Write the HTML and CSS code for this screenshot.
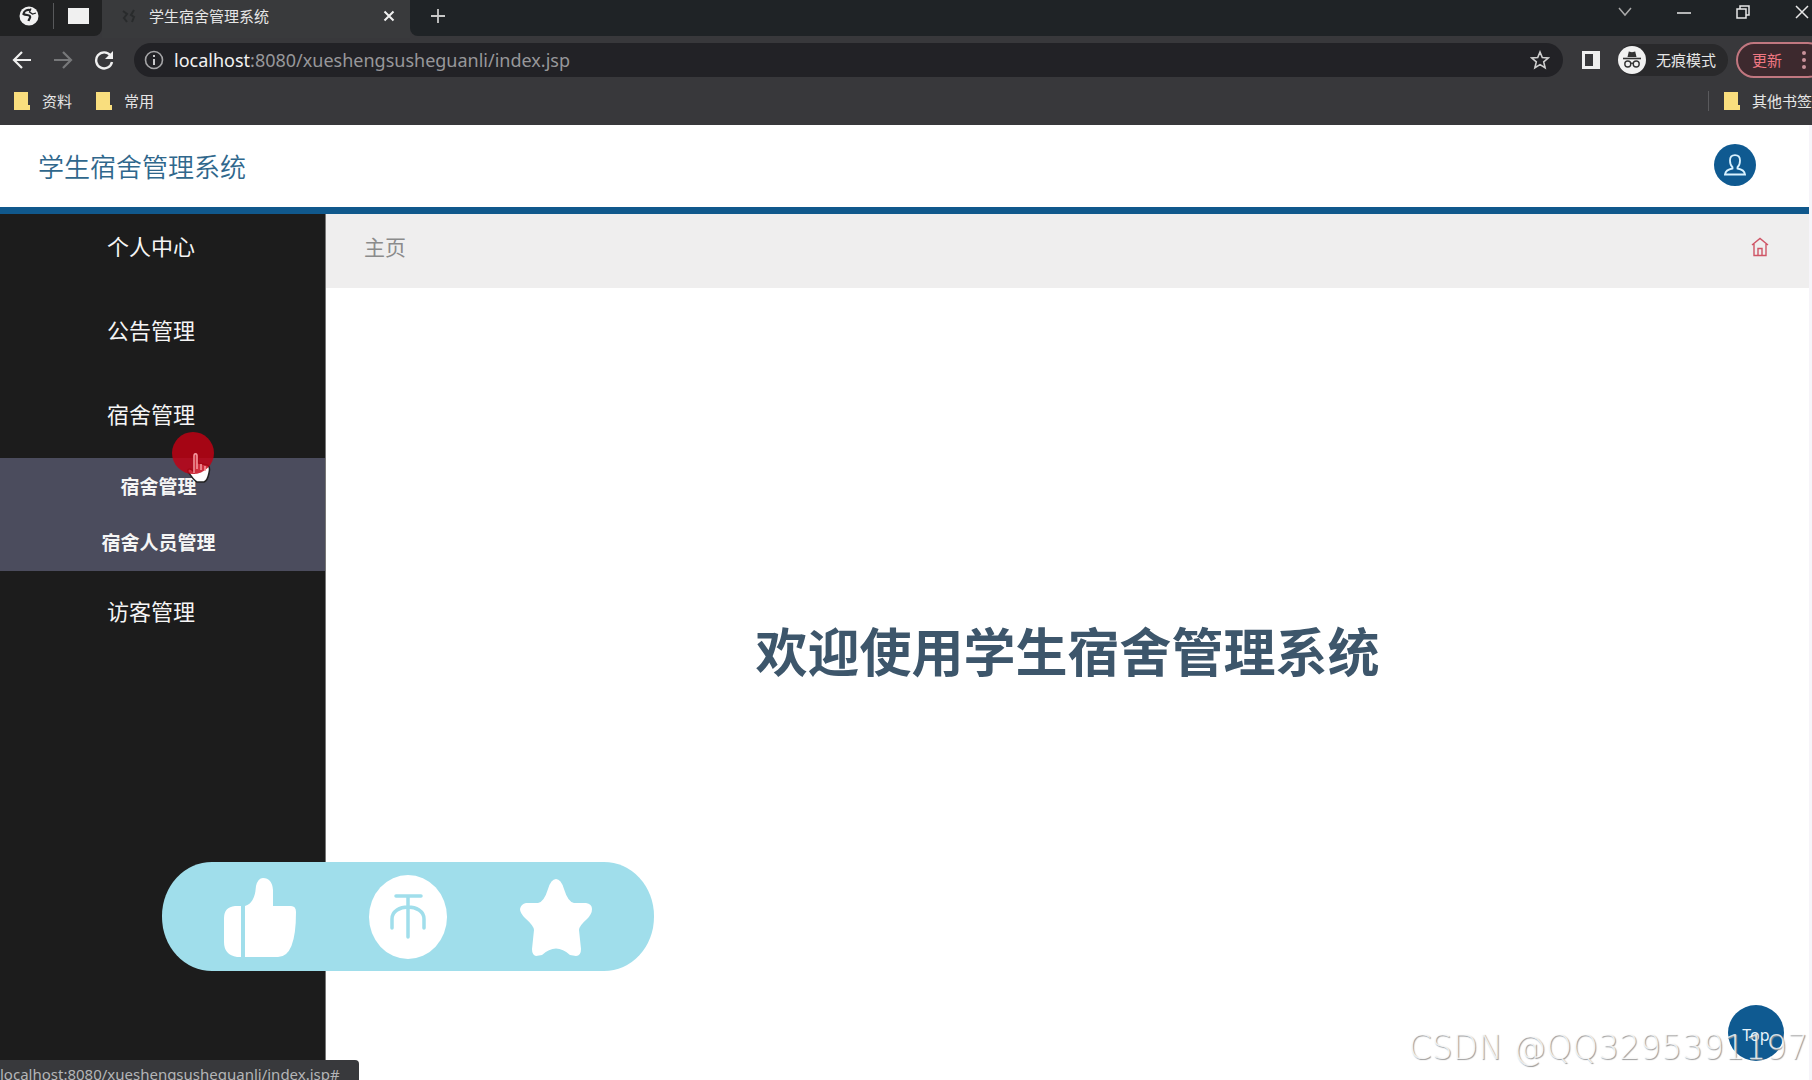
FILE: index.html
```html
<!DOCTYPE html>
<html lang="zh-CN">
<head>
<meta charset="utf-8">
<title>学生宿舍管理系统</title>
<link rel="stylesheet" href="styles.css">
</head>
<body>
<div class="browser">
  <div class="tab-strip">
    <div class="pinned">
      <svg class="globe" viewBox="0 0 20 20"><circle cx="10" cy="10" r="9.5" fill="#f1f1f1"/><path d="M11 4c-3-.5-6 1-6.500 4 2.500 1.500 5 .5 6.500 2.200 1 1.500-1 2.500-1.500 4.800" fill="none" stroke="#222426" stroke-width="2.200"/><path d="M12 2.500l-1.500 3.500 3 2 3.500-1" fill="none" stroke="#222426" stroke-width="1.300"/></svg>
      <span class="rule"></span>
      <span class="window-mark"></span>
    </div>
    <div class="tab">
      <svg class="favicon" viewBox="0 0 16 16"><path d="M2 3l4 3-3 4 3 4M13 2l-3 5 3 2-2 5" fill="none" stroke="#292b2c" stroke-width="2"/></svg>
      <span class="tab-title">学生宿舍管理系统</span>
      <button class="icon-btn" aria-label="关闭标签页"><svg width="12" height="12" viewBox="0 0 12 12"><path d="M1.500 1.500l9 9M10.500 1.500l-9 9" stroke="#f0f0f0" stroke-width="2"/></svg></button>
    </div>
    <div class="tab-rest">
      <button class="icon-btn" aria-label="新标签页"><svg width="16" height="16" viewBox="0 0 16 16"><path d="M8 1v14M1 8h14" stroke="#c8c8c8" stroke-width="1.800"/></svg></button>
      <div class="window-controls">
        <button class="icon-btn" aria-label="搜索标签页"><svg width="16" height="16" viewBox="0 0 16 16"><path d="M2 4l6 7 6-7" fill="none" stroke="#a9a9a9" stroke-width="1.500"/></svg></button>
        <button class="icon-btn" aria-label="最小化"><svg width="16" height="16" viewBox="0 0 16 16"><path d="M1 9h14" stroke="#e8e8e8" stroke-width="1.500"/></svg></button>
        <button class="icon-btn" aria-label="还原"><svg width="16" height="16" viewBox="0 0 16 16"><path d="M2 5h9v9H2zM5 5V2h9v9h-3" fill="none" stroke="#e8e8e8" stroke-width="1.500"/></svg></button>
        <button class="icon-btn" aria-label="关闭"><svg width="16" height="16" viewBox="0 0 16 16"><path d="M2 2l12 12M14 2L2 14" stroke="#e8e8e8" stroke-width="1.500"/></svg></button>
      </div>
    </div>
  </div>

  <div class="toolbar">
    <div class="nav-buttons">
      <button class="icon-btn" aria-label="后退"><svg width="20" height="20" viewBox="0 0 20 20"><path d="M19 10H2M10 2l-8 8 8 8" fill="none" stroke="#f0f0f0" stroke-width="2.200"/></svg></button>
      <button class="icon-btn" aria-label="前进"><svg width="20" height="20" viewBox="0 0 20 20"><path d="M1 10h17M10 2l8 8-8 8" fill="none" stroke="#77787a" stroke-width="2.200"/></svg></button>
      <button class="icon-btn" aria-label="重新加载"><svg width="20" height="20" viewBox="0 0 20 20"><path d="M16.500 5.500A8 8 0 1 0 18 12" fill="none" stroke="#f0f0f0" stroke-width="2.400"/><path d="M19 1v8h-8z" fill="#f0f0f0"/></svg></button>
    </div>
    <div class="address">
      <svg width="20" height="20" viewBox="0 0 20 20"><circle cx="10" cy="10" r="8.500" fill="none" stroke="#a5a5a7" stroke-width="1.600"/><path d="M10 9v6M10 5v2" stroke="#c9c9cb" stroke-width="2"/></svg>
      <span class="url"><b>localhost</b>:8080/xueshengsusheguanli/index.jsp</span>
      <button class="icon-btn" aria-label="添加书签"><svg width="20" height="20" viewBox="0 0 20 20"><path d="M10 2l2.300 5.500 5.900.5-4.500 3.900 1.400 5.800L10 14.600l-5.100 3.100 1.400-5.800L1.800 8l5.900-.5z" fill="none" stroke="#cfcfcf" stroke-width="1.600"/></svg></button>
    </div>
    <button class="icon-btn panel" aria-label="侧边栏"><svg width="18" height="18" viewBox="0 0 18 18"><path d="M1.500 1.500h15v15h-15z" fill="none" stroke="#f0f0f0" stroke-width="3"/><path d="M11 1h6v16h-6z" fill="#f0f0f0"/></svg></button>
    <div class="incognito">
      <svg width="28" height="28" viewBox="0 0 28 28"><circle cx="14" cy="14" r="14" fill="#f1f1f1"/><path d="M9.500 11l1.300-5.500 3.200.8 3.200-.8L18.500 11z" fill="#333"/><path d="M5 12.500h18" stroke="#333" stroke-width="1.600"/><circle cx="9.800" cy="18" r="3" fill="none" stroke="#333" stroke-width="1.400"/><circle cx="18.200" cy="18" r="3" fill="none" stroke="#333" stroke-width="1.400"/><path d="M12.800 17.500q1.200-.8 2.400 0" fill="none" stroke="#333" stroke-width="1.300"/></svg>
      <span>无痕模式</span>
    </div>
    <button class="update">更新<svg width="4" height="20" viewBox="0 0 4 20"><circle cx="2" cy="3" r="2"/><circle cx="2" cy="10" r="2"/><circle cx="2" cy="17" r="2"/></svg></button>
  </div>

  <div class="bookmarks">
    <a class="bookmark" href="#"><svg width="16" height="18" viewBox="0 0 16 18"><path d="M0 0h14v13h2v5H0z" fill="#f9de7e"/></svg>资料</a>
    <a class="bookmark" href="#"><svg width="16" height="18" viewBox="0 0 16 18"><path d="M0 0h14v13h2v5H0z" fill="#f9de7e"/></svg>常用</a>
    <div class="other"><a class="bookmark" href="#"><svg width="16" height="18" viewBox="0 0 16 18"><path d="M0 0h14v13h2v5H0z" fill="#f9de7e"/></svg>其他书签</a></div>
  </div>
</div>

<div class="page">
  <header class="site-header">
    <h1 class="site-title">学生宿舍管理系统</h1>
    <button class="avatar" aria-label="个人信息"><svg width="24" height="24" viewBox="0 0 24 24"><path d="M9.500 14.200C7.500 12.500 7 10 7 7.500 7 4 9 2.200 12 2.200s5 1.800 5 5.300c0 2.500-.5 5-2.500 6.700v1.300c4 .7 7 2.500 7.500 6H2c.5-3.500 3.500-5.300 7.500-6z" fill="none" stroke="#d9f2ff" stroke-width="1.800"/></svg></button>
  </header>
  <div class="columns">
    <nav class="sidebar">
      <ul class="menu">
        <li><a class="item" href="#">个人中心</a></li>
        <li><a class="item" href="#">公告管理</a></li>
        <li><a class="item" href="#">宿舍管理</a>
          <ul class="submenu">
            <li><a href="#">宿舍管理</a></li>
            <li><a href="#">宿舍人员管理</a></li>
          </ul>
        </li>
        <li><a class="item" href="#">访客管理</a></li>
      </ul>
    </nav>
    <main class="content">
      <div class="crumbs">
        <span>主页</span>
        <a href="#" aria-label="主页"><svg width="18" height="20" viewBox="0 0 18 20"><path d="M1 8l8-6.500L17 8M3 7v11.500h12V7M7 18.500v-7h4v7" fill="none" stroke="#cf5566" stroke-width="1.400"/></svg></a>
      </div>
      <div class="welcome"><h2>欢迎使用学生宿舍管理系统</h2></div>
    </main>
  </div>
</div>

<div class="pointer">
  <svg width="44" height="54" viewBox="0 0 44 54"><path d="M23 24c0-3 4-3 4 0v8l9 2c3 1 3 4 2 8-1 5-2 8-5 9h-7c-4-2-6-7-9-10-1-3 2-4 4-2l2 2z" fill="#fff" stroke="#222" stroke-width="1.500"/><circle cx="22" cy="22" r="21" fill="#c30012" fill-opacity=".82"/><path d="M23 42V25c0-3 3-3 3 0v8M26 38v-6M30 39v-6M34 40v-5" fill="none" stroke="#f59aa0" stroke-width="1.500"/></svg>
</div>

<div class="reactions">
  <button aria-label="点赞"><svg width="72" height="82" viewBox="0 0 72 82"><path d="M17 30v51h-4Q0 79 0 66V42Q0 31 11 30zM21 30Q31 27 32 10Q34 2 39 2Q48 2 49 14V30H67Q72 30 72 36Q72 81 54 81H21z" fill="#fff"/></svg></button>
  <button aria-label="投币"><svg width="80" height="84" viewBox="0 0 80 84"><ellipse cx="40" cy="42" rx="39" ry="42" fill="#fff"/><path d="M28 21h25M40 21v41M24 53v-9c0-16 32-16 32 0v9" fill="none" stroke="#a0deeb" stroke-width="3.500" stroke-linecap="round"/></svg></button>
  <button aria-label="收藏"><svg width="72" height="82" viewBox="0 0 72 82"><path d="M36 3Q41 3 44 13Q48 26 54 27H66Q72 28 72 33Q72 38 67 43Q59 50 59 54L61 73Q61 80 56 80L50 79Q36 66 22 79L16 80Q12 79 12 73L14 54Q14 50 5 42Q0 37 0 33Q1 28 6 27H18Q24 26 28 13Q31 3 36 3z" fill="#fff"/></svg></button>
</div>

<button class="to-top">Top</button>
<div class="status">localhost:8080/xueshengsusheguanli/index.jsp#</div>
<div class="watermark">CSDN @QQ3295391197</div>
</body>
</html>
```
FILE: styles.css
```css
* { box-sizing: border-box; }

body {
  margin: 0;
  position: relative;
  display: flex;
  flex-direction: column;
  height: 100vh;
  overflow: hidden;
  background: #fff;
  font-family: "Noto Sans", "Noto Sans CJK SC", sans-serif;
}

h1, h2, ul { margin: 0; padding: 0; list-style: none; }
a { color: inherit; text-decoration: none; }
svg { display: block; flex: none; }
button {
  padding: 0;
  border: 0;
  background: none;
  color: inherit;
  font: inherit;
}

/* Browser frame */
.browser {
  flex: none;
  overflow: hidden;
  background: #38383b;
  color: #e6e6e6;
  font-size: 15px;
  line-height: 20px;
}
.tab-strip { display: flex; height: 38px; }
.pinned {
  display: flex;
  align-items: center;
  gap: 14px;
  width: 102px;
  height: 36px;
  padding: 0 0 4px 19px;
  background: #212223;
  border-bottom-right-radius: 8px;
}
.globe { width: 20px; height: 20px; }
.rule { width: 1px; height: 26px; background: #58595b; }
.window-mark { width: 21px; height: 16px; background: #f0f0f0; }
.tab {
  display: flex;
  align-items: center;
  width: 308px;
  padding: 0 15px 6px 19px;
  background: #393a3c;
}
.favicon { width: 16px; height: 16px; }
.tab-title { flex: 1; margin-left: 12px; }
.tab-rest {
  display: flex;
  flex: 1;
  justify-content: space-between;
  align-items: center;
  height: 36px;
  padding: 0 2px 4px 20px;
  background: #1f2326;
  border-bottom-left-radius: 8px;
}
.window-controls { display: flex; gap: 43px; padding-bottom: 8px; }

.toolbar {
  display: flex;
  align-items: center;
  height: 45px;
  padding: 0 0 2px 12px;
}
.nav-buttons { display: flex; gap: 21px; width: 122px; }
.address {
  display: flex;
  flex: 1;
  align-items: center;
  height: 34px;
  padding: 0 13px 0 10px;
  border-radius: 17px;
  background: #222226;
}
.url {
  flex: 1;
  margin-left: 10px;
  color: #97979a;
  font-size: 18px;
}
.url b { color: #f2f2f2; font-weight: 400; }
.panel { margin: 0 18px 0 19px; }
.incognito {
  display: flex;
  align-items: center;
  gap: 10px;
  width: 110px;
  height: 32px;
  margin-right: 8px;
  border-radius: 16px;
  background: #29292b;
}
.update {
  display: flex;
  align-items: center;
  justify-content: space-between;
  width: 90px;
  height: 36px;
  margin-right: -14px;
  padding: 0 18px 0 14px;
  border: 2px solid #c17780;
  border-radius: 18px;
  background: #3d292e;
  color: #ef7782;
}
.update svg { fill: #c9929a; }

.bookmarks {
  display: flex;
  align-items: center;
  gap: 24px;
  height: 42px;
  padding: 0 0 6px 14px;
}
.bookmark {
  display: flex;
  align-items: center;
  gap: 12px;
  white-space: nowrap;
}
.other {
  margin-left: auto;
  padding-left: 15px;
  border-left: 1px solid #5a5a5d;
}

/* Site */
.page {
  display: flex;
  flex: 1;
  flex-direction: column;
  min-height: 0;
  padding-right: 3px;
  background: #f6f4f9;
}
.site-header {
  display: flex;
  flex: none;
  justify-content: space-between;
  align-items: center;
  height: 89px;
  padding: 0 53px 2px 38px;
  border-bottom: 7px solid #10588c;
  background: #fff;
  z-index: 1;
}
.site-title {
  padding-top: 4px;
  color: #2f678c;
  font-size: 26px;
  font-weight: 350;
  line-height: 40px;
}
.avatar {
  display: grid;
  place-items: center;
  width: 42px;
  height: 42px;
  border-radius: 50%;
  background: #0f5a91;
}
.columns { display: flex; flex: 1; min-height: 0; }
.sidebar {
  flex: none;
  width: 326px;
  margin-top: -8px;
  border-right: 1px solid #777;
  background: #1c1c1c;
  color: #f5f5f5;
}
.item {
  display: block;
  padding: 0 0 4px 107px;
  font-size: 22px;
  line-height: 80px;
}
.submenu {
  padding: 1px 8px 0 0;
  background: #4b4c5d;
  font-size: 19px;
  font-weight: 700;
  line-height: 56px;
  text-align: center;
}
.submenu a { display: block; }
.content {
  display: flex;
  flex: 1;
  flex-direction: column;
  background: #fff;
}
.crumbs {
  display: flex;
  justify-content: space-between;
  align-items: center;
  height: 74px;
  padding: 0 40px 8px 38px;
  background: #efeeee;
  color: #8b8b8b;
  font-size: 21px;
  line-height: 30px;
}
.welcome {
  flex: 1;
  padding-top: 326px;
  color: #3d566b;
  text-align: center;
}
.welcome h2 { font-size: 52px; line-height: 76px; }

/* Layers over the page */
.pointer { position: absolute; left: 171px; top: 431px; }
.reactions {
  position: absolute;
  left: 162px;
  top: 862px;
  display: flex;
  justify-content: space-between;
  align-items: center;
  width: 492px;
  height: 109px;
  padding: 0 62px;
  border-radius: 50px / 54px;
  background: #a0deeb;
}
.to-top {
  position: absolute;
  right: 28px;
  bottom: 19px;
  width: 56px;
  height: 56px;
  padding-top: 4px;
  border-radius: 50%;
  background: #0f5a91;
  color: #e8f4fb;
  font-size: 16px;
}
.status {
  position: absolute;
  left: 0;
  bottom: -8px;
  width: 359px;
  height: 28px;
  border-top-right-radius: 4px;
  background: #38393c;
  color: #b4b5b7;
  font-size: 15px;
  line-height: 28px;
  white-space: nowrap;
}
.watermark {
  position: absolute;
  right: 4px;
  bottom: 12px;
  color: rgba(255, 255, 255, .8);
  font-family: "DejaVu Sans Light", "DejaVu Sans ExtraLight", "DejaVu Sans", sans-serif;
  font-size: 33px;
  font-weight: 200;
  line-height: 40px;
  text-shadow: 1px 1px 1px #999;
  white-space: nowrap;
}
```
